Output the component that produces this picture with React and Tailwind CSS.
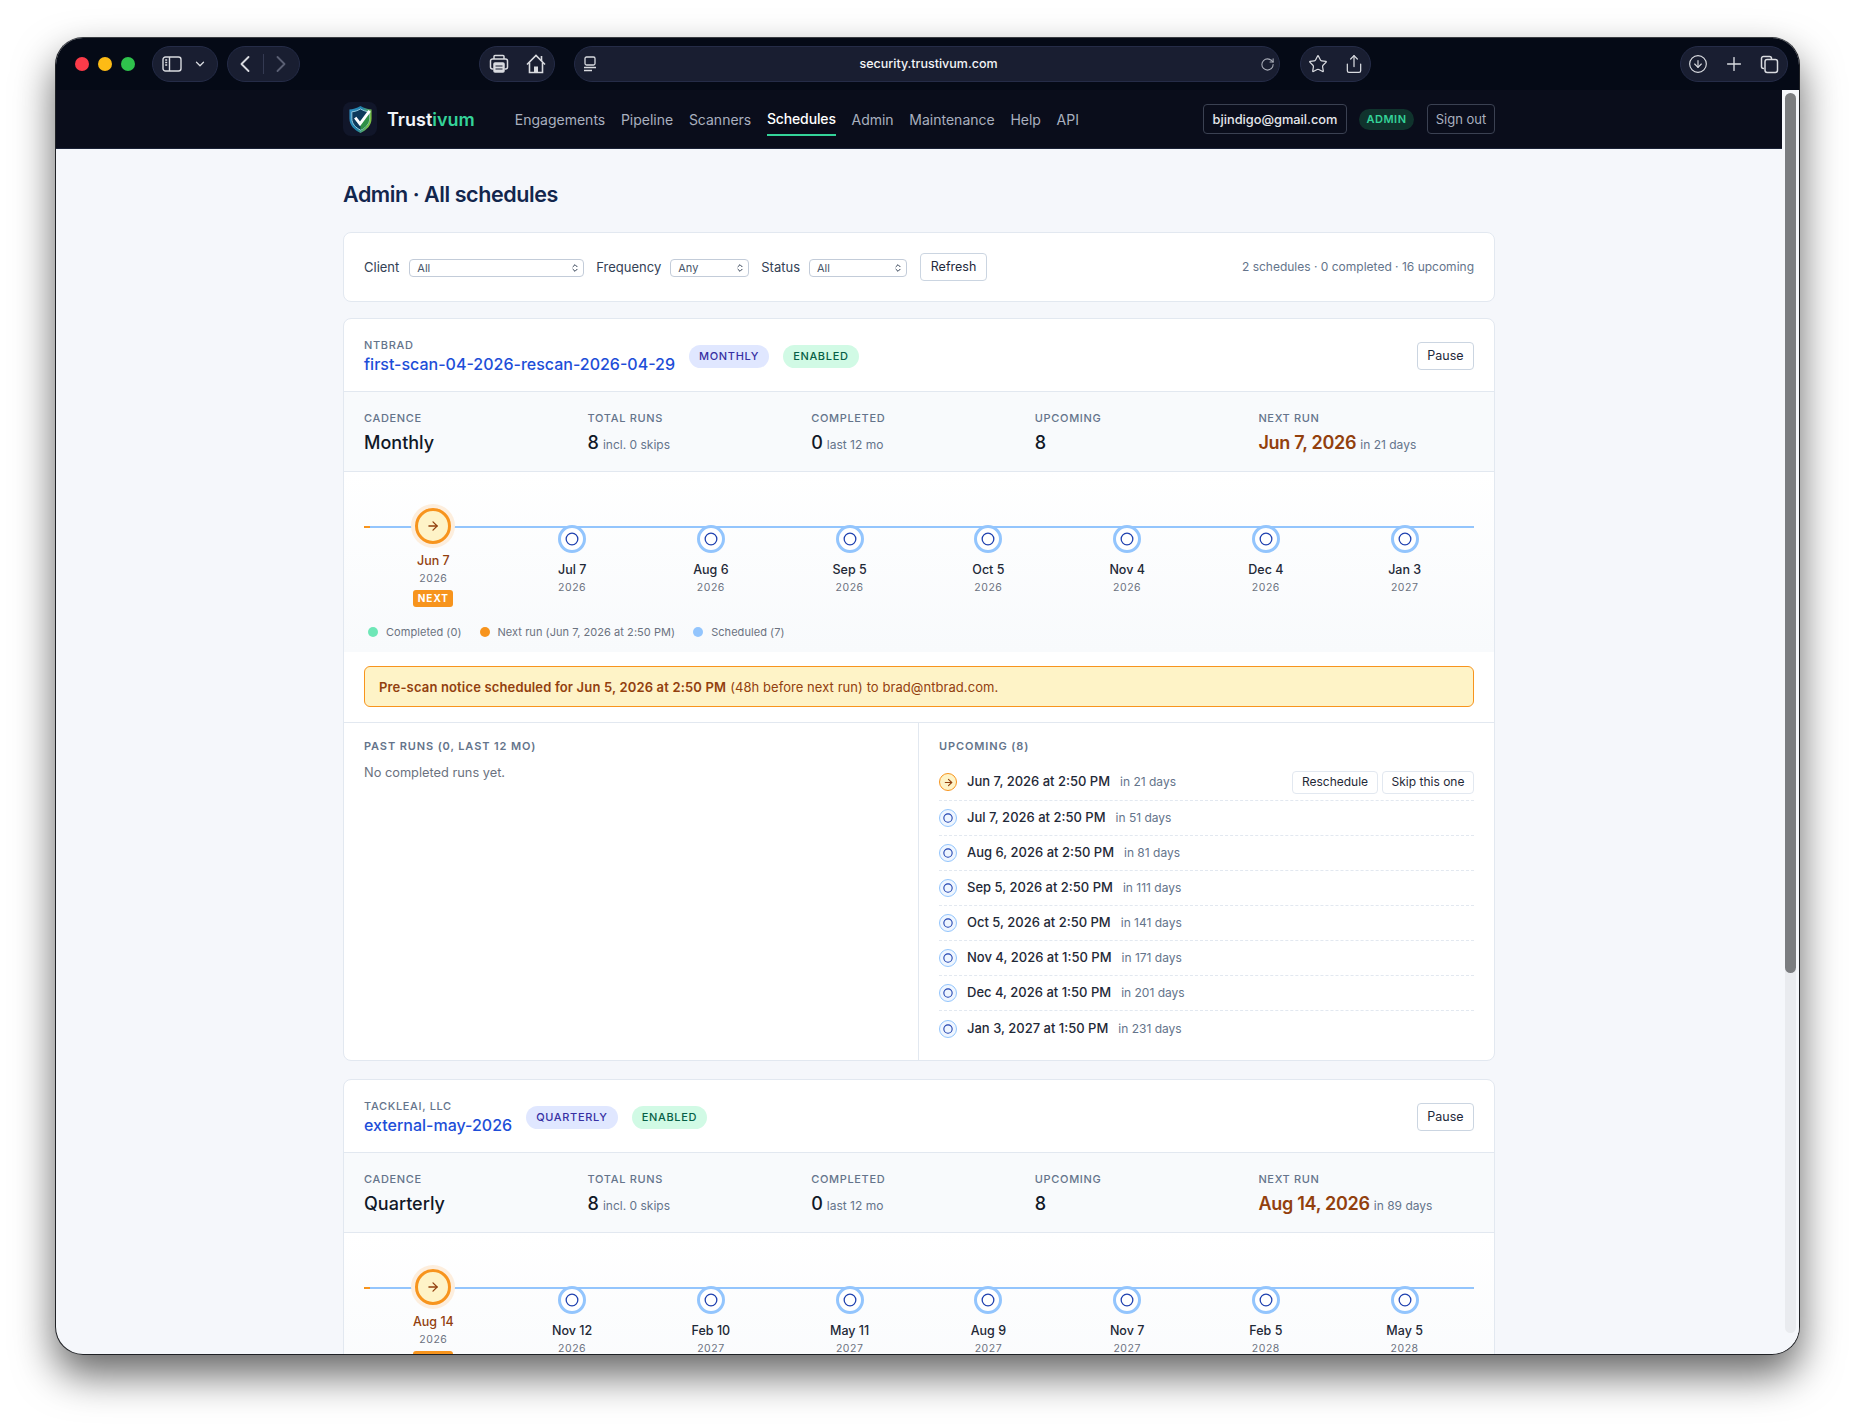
import React from "react";
import {
  ArrowRight,
  ChevronDown,
  ChevronLeft,
  ChevronRight,
  ChevronsUpDown,
  Circle,
  CircleArrowDown,
  Plus,
  RotateCw,
  Share,
  Star,
} from "lucide-react";

const navItems = ["Engagements", "Pipeline", "Scanners", "Schedules", "Admin", "Maintenance", "Help", "API"];

const firstUpcoming = [
  ["Jun 7, 2026 at 2:50 PM", "in 21 days"],
  ["Jul 7, 2026 at 2:50 PM", "in 51 days"],
  ["Aug 6, 2026 at 2:50 PM", "in 81 days"],
  ["Sep 5, 2026 at 2:50 PM", "in 111 days"],
  ["Oct 5, 2026 at 2:50 PM", "in 141 days"],
  ["Nov 4, 2026 at 1:50 PM", "in 171 days"],
  ["Dec 4, 2026 at 1:50 PM", "in 201 days"],
  ["Jan 3, 2027 at 1:50 PM", "in 231 days"],
];

const schedules = [
  {
    client: "NTBRAD",
    name: "first-scan-04-2026-rescan-2026-04-29",
    freq: "MONTHLY",
    cadence: "Monthly",
    next: "Jun 7, 2026",
    nextIn: "in 21 days",
    dates: [
      ["Jun 7", "2026"],
      ["Jul 7", "2026"],
      ["Aug 6", "2026"],
      ["Sep 5", "2026"],
      ["Oct 5", "2026"],
      ["Nov 4", "2026"],
      ["Dec 4", "2026"],
      ["Jan 3", "2027"],
    ],
    legend: "Next run (Jun 7, 2026 at 2:50 PM)",
    notice: "Pre-scan notice scheduled for Jun 5, 2026 at 2:50 PM",
  },
  {
    client: "TACKLEAI, LLC",
    name: "external-may-2026",
    freq: "QUARTERLY",
    cadence: "Quarterly",
    next: "Aug 14, 2026",
    nextIn: "in 89 days",
    dates: [
      ["Aug 14", "2026"],
      ["Nov 12", "2026"],
      ["Feb 10", "2027"],
      ["May 11", "2027"],
      ["Aug 9", "2027"],
      ["Nov 7", "2027"],
      ["Feb 5", "2028"],
      ["May 5", "2028"],
    ],
    legend: "Next run (Aug 14, 2026 at 2:50 PM)",
    notice: "Pre-scan notice scheduled for Aug 12, 2026 at 2:50 PM",
  },
];

const Pill = ({ className, children }) => (
  <div className={"flex h-[36px] items-center rounded-full border border-[#252c47] bg-[#191e31] " + className}>
    {children}
  </div>
);

const Shield = () => (
  <div className="flex h-[34px] w-[34px] items-center justify-center rounded-lg bg-[#11162a]">
    <svg width="25" height="29" viewBox="0 0 26 30">
      <defs>
        <linearGradient id="shieldEdge" x1="0" y1="0" x2="1" y2="0.3">
          <stop offset="0" stopColor="#2f8fc4" />
          <stop offset="0.55" stopColor="#1e7fa8" />
          <stop offset="1" stopColor="#7ac143" />
        </linearGradient>
      </defs>
      <path d="M13 1 C9 3.5 5 4.5 1.5 4.5 V14 C1.5 21 6.5 26 13 29 C19.5 26 24.5 21 24.5 14 V4.5 C21 4.5 17 3.5 13 1 Z" fill="url(#shieldEdge)" />
      <path d="M13 4 C10 5.8 7 6.8 4 7 V14 C4 19.5 8 23.5 13 26 C18 23.5 22 19.5 22 14 V7 C19 6.8 16 5.8 13 4 Z" fill="#0d3a5c" stroke="#a6d8ea" strokeWidth="0.9" />
      <path d="M13 26 C18 23.5 22 19.5 22 14 V9 L13 20 Z" fill="#2f8f45" />
      <path d="M7.5 13 L12.5 19.5 L22.5 6" fill="none" stroke="#ffffff" strokeWidth="3" />
    </svg>
  </div>
);

const Toolbar = () => (
  <div className="flex h-[52px] shrink-0 items-start bg-[#050a16] pt-[8px] text-[#d9dbe0]">
    <div className="ml-[19px] mt-[11px] flex gap-[9px]">
      <span className="h-[14px] w-[14px] rounded-full bg-[#fb3b49]" />
      <span className="h-[14px] w-[14px] rounded-full bg-[#fdbb15]" />
      <span className="h-[14px] w-[14px] rounded-full bg-[#2fc24c]" />
    </div>
    <Pill className="ml-[17px] w-[66px] pl-[9px]">
      <svg width="20" height="16" viewBox="0 0 20 16" fill="none" stroke="currentColor" strokeWidth="1.4">
        <rect x="1" y="1" width="18" height="14" rx="2.5" />
        <path d="M7.5 1 V15" />
        <path d="M3.2 4 H5.2 M3.2 6.5 H5.2 M3.2 9 H5.2" />
      </svg>
      <ChevronDown size={14} strokeWidth={2.2} className="ml-[11px]" />
    </Pill>
    <Pill className="ml-[9px] w-[73px] pl-[3px]">
      <ChevronLeft size={28} strokeWidth={1.6} />
      <span className="ml-[4px] h-[20px] w-px bg-[#343a52]" />
      <ChevronRight size={28} strokeWidth={1.6} className="ml-[3px] text-[#5a5f73]" />
    </Pill>
    <Pill className="ml-[179px] w-[76px] pl-[9px]">
      <svg width="20" height="20" viewBox="0 0 20 20" fill="none" stroke="currentColor" strokeWidth="1.5">
        <path d="M5 5 V2.5 A1 1 0 0 1 6 1.5 H14 A1 1 0 0 1 15 2.5 V5" />
        <path d="M4.5 15 H3.5 A2 2 0 0 1 1.5 13 V7 A2 2 0 0 1 3.5 5 H16.5 A2 2 0 0 1 18.5 7 V13 A2 2 0 0 1 16.5 15 H15.5" />
        <rect x="5" y="9" width="10" height="9" rx="1" fill="currentColor" />
        <path d="M6.5 12 H13.5 M6.5 15 H13.5" stroke="#191e31" strokeWidth="1.2" />
      </svg>
      <svg width="22" height="22" viewBox="0 0 22 22" fill="none" stroke="currentColor" strokeWidth="1.6" className="ml-[16px]">
        <path d="M2 11.5 L11 2.5 L20 11.5" />
        <path d="M16.5 3 V8" />
        <path d="M4.5 9.5 V19.5 H17.5 V9.5" />
        <rect x="9" y="13.5" width="4" height="6" fill="currentColor" stroke="none" />
      </svg>
    </Pill>
    <Pill className="ml-[19px] w-[706px] pl-[8px] pr-[4px]">
      <svg width="14" height="16" viewBox="0 0 14 16" fill="none" stroke="currentColor" strokeWidth="1.3">
        <rect x="2" y="1" width="10" height="8" rx="1.5" />
        <path d="M1 11.5 H13 M1 14.5 H9" />
      </svg>
      <span className="flex-1 text-center text-[12.5px] font-medium text-[#f3f4f6]">security.trustivum.com</span>
      <RotateCw size={15} strokeWidth={1.7} className="text-[#a9adb8]" />
    </Pill>
    <Pill className="ml-[20px] w-[71px] pl-[7px]">
      <Star size={20} strokeWidth={1.5} />
      <Share size={20} strokeWidth={1.5} className="ml-[16px]" />
    </Pill>
    <Pill className="ml-[309px] w-[108px] pl-[7px]">
      <CircleArrowDown size={20} strokeWidth={1.4} />
      <Plus size={22} strokeWidth={1.5} className="ml-[15px]" />
      <svg width="19" height="19" viewBox="0 0 19 19" fill="none" stroke="currentColor" strokeWidth="1.5" className="ml-[15px]">
        <path d="M4 13.5 H3.5 A2 2 0 0 1 1.5 11.5 V3.5 A2 2 0 0 1 3.5 1.5 H9.5 A2 2 0 0 1 11.5 3.5 V4" />
        <rect x="5" y="4.5" width="12.5" height="13" rx="2.2" />
      </svg>
    </Pill>
  </div>
);

const TopNav = () => (
  <div className="flex h-[59px] shrink-0 justify-center border-b border-[#1a2136] bg-[#0a0d1b]">
    <div className="flex w-[1152px] items-center">
      <Shield />
      <span className="ml-[10px] text-[18px] font-semibold text-[#f1f3f8]">
        Trust<span className="text-[#34d399]">ivum</span>
      </span>
      <div className="ml-[40px] flex h-[58px] flex-1 gap-[15.7px]">
        {navItems.map((item) => (
          <div key={item} className="flex h-[43px] items-center pt-[14px]">
            <span
              className={
                item === "Schedules"
                  ? "border-b-2 border-[#34d399] pb-[5px] pt-[7px] text-[14px] font-medium tracking-[-0.01em] text-white"
                  : "pb-[5px] pt-[7px] text-[14px] text-[#a9b0bf]"
              }
            >
              {item}
            </span>
          </div>
        ))}
      </div>
      <div className="flex h-[30px] w-[144px] items-center justify-center rounded border border-[#3b4152] pt-px text-[12.8px] font-medium text-[#e5e7eb]">
        bjindigo@gmail.com
      </div>
      <div className="ml-[12px] flex h-[21px] w-[55px] items-center justify-center rounded-full bg-[#10332d] pt-px text-[11px] font-semibold tracking-[0.05em] text-[#34d399]">
        ADMIN
      </div>
      <div className="ml-[13px] flex h-[30px] w-[68px] items-center justify-center rounded border border-[#3b4152] pt-px text-[13px] text-[#a9b0bf]">
        Sign out
      </div>
    </div>
  </div>
);

const FilterSelect = ({ value, width }) => (
  <div className={"flex h-[18px] items-center justify-between rounded border border-[#c3ccd9] bg-white pl-[7px] pr-[3px] text-[11px] text-[#475569] " + width}>
    {value}
    <ChevronsUpDown size={10} strokeWidth={2.4} className="text-[#334155]" />
  </div>
);

const Filters = () => (
  <div className="flex h-[70px] shrink-0 items-center rounded-lg border border-[#e2e8f0] bg-white pl-[20px] pr-[20px] pt-[2px] text-[13px] text-[#334155]">
    <span>Client</span>
    <FilterSelect value="All" width="ml-[10px] w-[175px]" />
    <span className="ml-[12px]">Frequency</span>
    <FilterSelect value="Any" width="ml-[9px] w-[79px]" />
    <span className="ml-[12px]">Status</span>
    <FilterSelect value="All" width="ml-[9px] w-[98px]" />
    <button className="mb-[2px] ml-[13px] h-[28px] w-[67px] rounded border border-[#cbd5e1] bg-white text-[12.5px] text-[#1e293b]">
      Refresh
    </button>
    <span className="mb-[2px] ml-auto text-[12px] text-[#64748b]">2 schedules · 0 completed · 16 upcoming</span>
  </div>
);

const Stat = ({ label, value, sub, accent }) => (
  <div>
    <div className="text-[11px] font-medium leading-[14px] tracking-[0.06em] text-[#64748b]">{label}</div>
    <div className="mt-[6px] flex items-baseline gap-[4px]">
      <span className={accent ? "text-[18px] font-semibold leading-[24px] tracking-[-0.015em] text-[#92400e]" : "text-[18px] font-medium leading-[24px] text-[#111827]"}>
        {value}
      </span>
      {sub && <span className="text-[12px] text-[#64748b]">{sub}</span>}
    </div>
  </div>
);

const Timeline = ({ dates }) => (
  <div className="relative grid grid-cols-8">
    <div className="absolute left-0 right-0 top-[18px] h-[2px] bg-[#93c5fd]" />
    <div className="absolute left-0 top-[18px] h-[2px] w-[6px] bg-[#f7941d]" />
    {dates.map(([day, year], i) => (
      <div key={day} className={i === 0 ? "relative flex flex-col items-center" : "relative flex flex-col items-center pt-[17px]"}>
        {i === 0 ? (
          <div className="flex h-[36px] w-[36px] items-center justify-center rounded-full border-[3px] border-[#f7941d] bg-[#fef3c7] text-[#92400e] shadow-[0_0_0_4px_#fdeedd]">
            <ArrowRight size={14} strokeWidth={2.2} />
          </div>
        ) : (
          <div className="flex h-[28px] w-[28px] items-center justify-center rounded-full border-[3px] border-[#93c5fd] bg-white text-[#1e40af]">
            <Circle size={14} strokeWidth={2.2} />
          </div>
        )}
        <div className={i === 0 ? "mt-[9px] text-[12.5px] font-medium leading-[16px] text-[#92400e]" : "mt-[9px] text-[12.5px] font-medium leading-[16px] text-[#1f2937]"}>
          {day}
        </div>
        <div className="mt-[3px] text-[10.5px] leading-[14px] tracking-[0.05em] text-[#6b7280]">{year}</div>
        {i === 0 && (
          <div className="mt-[4px] flex h-[17px] w-[40px] items-center justify-center rounded-[3px] bg-[#f7941d] text-[10px] font-bold tracking-[0.1em] text-white">
            NEXT
          </div>
        )}
      </div>
    ))}
  </div>
);

const Legend = ({ color, children }) => (
  <div className="flex items-center gap-2">
    <span className={"h-[10px] w-[10px] rounded-full " + color} />
    <span>{children}</span>
  </div>
);

const UpcomingRow = ({ when, inDays, first }) => (
  <div className={first ? "flex h-[37px] items-center border-b border-dashed border-[#e2e8f0]" : "flex h-[35px] items-center border-b border-dashed border-[#e2e8f0] last:border-b-0"}>
    {first ? (
      <div className="flex h-[18px] w-[18px] items-center justify-center rounded-full border border-[#f7941d] bg-[#fef3c7] text-[#92400e]">
        <ArrowRight size={11} strokeWidth={2.4} />
      </div>
    ) : (
      <div className="flex h-[18px] w-[18px] items-center justify-center rounded-full border border-[#93c5fd] bg-[#eff6ff] text-[#1e40af]">
        <Circle size={10} strokeWidth={2.6} />
      </div>
    )}
    <span className="ml-[10px] text-[13px] font-medium text-[#1f2937]">{when}</span>
    <span className="ml-[10px] text-[12px] text-[#64748b]">{inDays}</span>
    {first && (
      <div className="ml-auto flex gap-[4px]">
        <button className="h-[23px] w-[86px] rounded border border-[#e2e8f0] bg-white text-[12px] text-[#1f2937]">Reschedule</button>
        <button className="h-[23px] w-[92px] rounded border border-[#e2e8f0] bg-white text-[12px] text-[#1f2937]">Skip this one</button>
      </div>
    )}
  </div>
);

const ScheduleCard = ({ item }) => (
  <div className="flex h-[743px] shrink-0 flex-col overflow-hidden rounded-lg border border-[#e2e8f0] bg-white">
    <div className="flex h-[73px] shrink-0 items-center border-b border-[#e2e8f0] px-5 pt-[2px]">
      <div>
        <div className="text-[11px] font-medium leading-[14px] tracking-[0.06em] text-[#64748b]">{item.client}</div>
        <div className="mt-[1px] text-[16px] font-medium leading-[22px] text-[#1d4ed8]">{item.name}</div>
      </div>
      <span className="ml-[14px] flex h-[23px] items-center rounded-full bg-[#e0e7ff] px-[10px] text-[11px] font-medium tracking-[0.06em] text-[#3730a3]">
        {item.freq}
      </span>
      <span className="ml-[14px] flex h-[23px] items-center rounded-full bg-[#d1fae5] px-[10px] text-[11px] font-medium tracking-[0.06em] text-[#065f46]">
        ENABLED
      </span>
      <button className="ml-auto h-[28px] w-[57px] rounded border border-[#cbd5e1] bg-white text-[12.5px] text-[#1e293b]">Pause</button>
    </div>
    <div className="grid h-[80px] shrink-0 grid-cols-5 items-center gap-2 border-b border-[#e2e8f0] bg-[#f8fafc] px-5 pt-[2px]">
      <Stat label="CADENCE" value={item.cadence} />
      <Stat label="TOTAL RUNS" value="8" sub="incl. 0 skips" />
      <Stat label="COMPLETED" value="0" sub="last 12 mo" />
      <Stat label="UPCOMING" value="8" />
      <Stat label="NEXT RUN" value={item.next} sub={item.nextIn} accent />
    </div>
    <div className="h-[180px] shrink-0 bg-gradient-to-b from-white to-[#f8fafc] px-5 pt-[36px]">
      <Timeline dates={item.dates} />
      <div className="mt-[17px] flex gap-[18px] pl-[4px] text-[11px] leading-[16px] tracking-[0.005em] text-[#6b7280]">
        <Legend color="bg-[#6ee7b7]">Completed (0)</Legend>
        <Legend color="bg-[#f7941d]">{item.legend}</Legend>
        <Legend color="bg-[#93c5fd]">Scheduled (7)</Legend>
      </div>
    </div>
    <div className="shrink-0 border-b border-[#e2e8f0] px-5 pb-[15px] pt-[14px]">
      <div className="flex h-[41px] items-center rounded-md border border-[#f7941d] bg-[#fef3c7] px-[14px] pt-[2px] text-[13px] tracking-[0.005em] text-[#92400e]">
        <span className="font-semibold tracking-[0.012em]">{item.notice}</span>
        <span className="ml-[4px]">(48h before next run) to brad@ntbrad.com.</span>
      </div>
    </div>
    <div className="grid flex-1 grid-cols-2">
      <div className="border-r border-[#e2e8f0] pl-5 pt-[16px]">
        <div className="text-[11px] font-semibold leading-[14px] tracking-[0.08em] text-[#64748b]">PAST RUNS (0, LAST 12 MO)</div>
        <div className="mt-[11px] text-[12.8px] leading-[18px] text-[#6b7280]">No completed runs yet.</div>
      </div>
      <div className="pl-[20px] pr-5 pt-[16px]">
        <div className="text-[11px] font-semibold leading-[14px] tracking-[0.08em] text-[#64748b]">UPCOMING (8)</div>
        <div className="mt-[11px]">
          {firstUpcoming.map(([when, inDays], i) => (
            <UpcomingRow key={when} when={when} inDays={inDays} first={i === 0} />
          ))}
        </div>
      </div>
    </div>
  </div>
);

const Scrollbar = () => (
  <div className="w-[17px] shrink-0 bg-[#f5f7fb] px-[3px] pt-[3px]">
    <div className="h-[1240px] rounded-full bg-[#e9ebef]">
      <div className="h-[880px] rounded-full bg-[#7b7d80]" />
    </div>
  </div>
);

const App = () => (
  <div className="flex h-[1428px] w-[1855px] overflow-hidden bg-white pl-[55px] pt-[37px] font-['Inter',sans-serif]">
    <div className="flex h-[1318px] w-[1745px] flex-col overflow-hidden rounded-[28px] border border-[#202226] border-t-[#3a3d42] bg-[#f5f7fb] shadow-[0_20px_40px_rgba(0,0,0,0.6)]">
      <Toolbar />
      <div className="flex min-h-0 flex-1">
        <div className="flex min-w-0 flex-1 flex-col overflow-hidden">
          <TopNav />
          <div className="mx-auto flex w-[1152px] flex-col pt-[29px]">
            <h1 className="mb-[22px] text-[21.5px] font-semibold leading-[32px] tracking-[-0.02em] text-[#12264d]">Admin · All schedules</h1>
            <div className="flex flex-col gap-[16px]">
              <Filters />
              <div className="flex flex-col gap-[18px]">
                {schedules.map((item) => (
                  <ScheduleCard key={item.name} item={item} />
                ))}
              </div>
            </div>
          </div>
        </div>
        <Scrollbar />
      </div>
    </div>
  </div>
);

export default App;
